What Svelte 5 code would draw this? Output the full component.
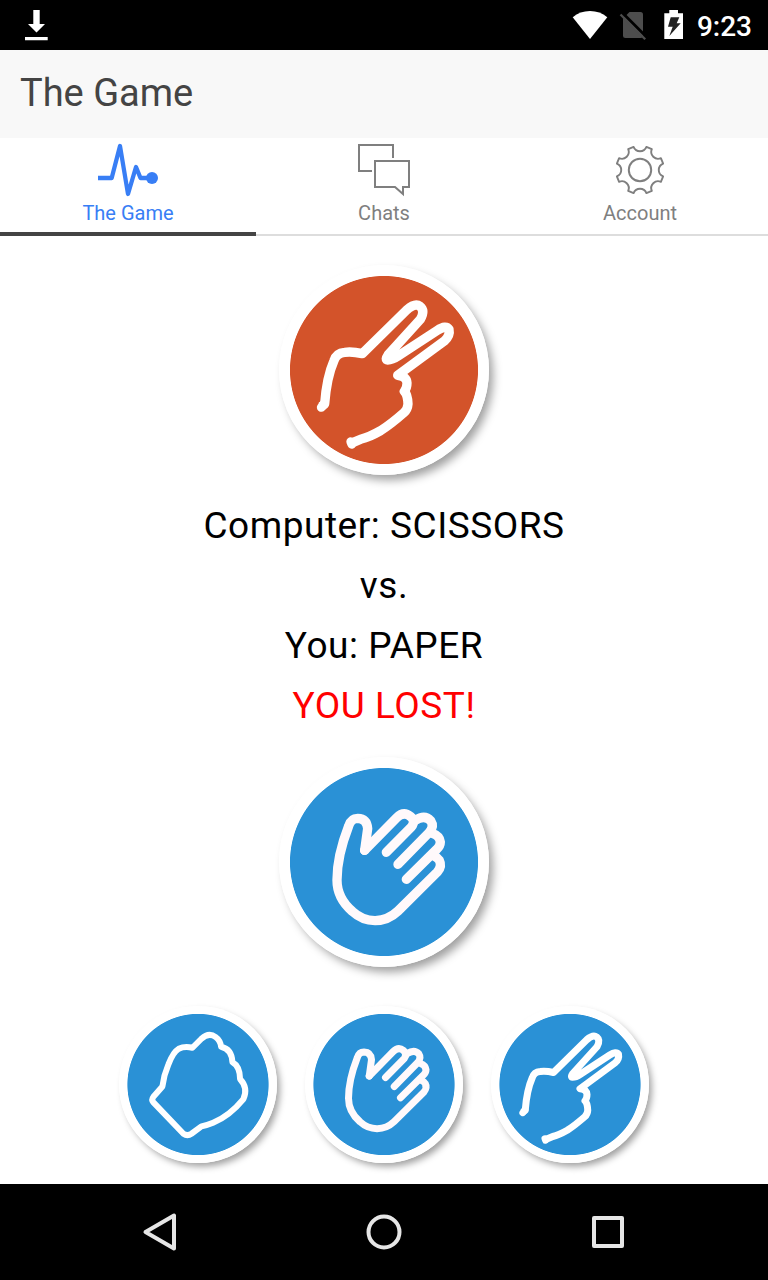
<script>
  const tabs = [
    { id: 'game', label: 'The Game' },
    { id: 'chats', label: 'Chats' },
    { id: 'account', label: 'Account' }
  ];
  let active = $state('game');

  const moves = ['rock', 'paper', 'scissors'];

  const polar = (r, deg) => {
    const a = (deg * Math.PI) / 180;
    return `${(32 + r * Math.sin(a)).toFixed(2)} ${(32 - r * Math.cos(a)).toFixed(2)}`;
  };
  const gear =
    Array.from({ length: 8 }, (_, k) => {
      const c = k * 45;
      return `${k ? 'L' : 'M'}${polar(24, c - 15.5)} A6.9 6.9 0 0 0 ${polar(24, c + 15.5)}`;
    }).join(' ') + 'Z';
</script>

{#snippet hand(kind)}
  {#if kind === 'rock'}
    <svg viewBox="27.75 16.75 472.5 472.5" fill="none" stroke="#fff" stroke-width="18" stroke-linejoin="round">
      <path d="M158 258Q162 225 176 192Q190 155 207 145Q225 136 248 142L275 115Q297 95 318 110Q332 120 334 139Q366 146 368 185Q391 198 391 236Q416 262 401 296Q360 346 310 367Q290 375 275 378L245 400Q233 408 221 400L131 306Q124 298 131 289Z" />
    </svg>
  {:else if kind === 'paper'}
    <svg viewBox="15 13 630 630" fill="none" stroke="#fff9fb" stroke-width="28" stroke-linecap="round" stroke-linejoin="round">
      <path d="M272 293L281 228Q279 198 251 197Q231 197 224 220Q189 310 189 382C189 425 207 452 235 476C275 513 332 513 372 475L490 358Q505 340 496 323Q491 315 483 312" />
      <path d="M272 293L368 195Q389 174 409 191Q426 205 412 223L337 299" />
      <path d="M424 203Q452 185 470 204Q482 222 465 240L372 335" />
      <path d="M477 243Q497 250 499 268Q499 280 488 290L397 380" />
    </svg>
  {:else}
    <svg viewBox="15 13 630 630" fill="none" stroke="#fff" stroke-width="28" stroke-linecap="round" stroke-linejoin="round">
      <path d="M142 438L152 430Q158 350 180 300Q187 277 212 275Q235 272 265 279L398 148Q423 126 438 137Q454 150 439 176L342 283Q332 298 341 298Q355 298 374 285L490 209Q516 192 525 206Q529 225 512 240L371 344Q398 347 399 367Q399 383 391 392Q401 402 402 430Q401 446 390 456Q350 491 320 510Q285 530 262 535L229 549" stroke-linecap="butt" />
      <path d="M142 440L151 428" stroke-width="27" />
      <path d="M230 543L233 551" stroke-width="26" />
    </svg>
  {/if}
{/snippet}

<div class="screen">
  <div class="status">
    <svg class="download" viewBox="0 0 24 32" width="24" height="32" fill="#fff">
      <path d="M9.300 1h6.400v14H21l-8.500 8.500L4 15h5.300zM1 28h22.700v3.300H1z" />
    </svg>
    <div class="indicators">
      <svg viewBox="572 0 116 50" width="116" height="50">
        <path fill="#fff" d="M572.700 17.300Q580 11 590 11T607.300 17.300L590 39Z" />
        <path fill="#4d4d4d" d="M629.500 12H640.500Q643 12 643 14.500V35.500Q643 38 640.500 38H625.500Q623 38 623 35.500V18.500Z" />
        <path stroke="#000" stroke-width="3" d="M621 11.500L648 38.500" />
        <path stroke="#4d4d4d" stroke-width="2.300" d="M620.500 14.500L645.200 39.200" />
        <path fill="#fff" d="M669.300 10H678v3.300h5V39h-18.700V13.300h5z" />
        <path fill="#222" d="M670.700 17.300h8.600l-2.600 6h4L669.300 36l3.400-9.300H668z" />
      </svg>
      <span class="clock">9:23</span>
    </div>
  </div>

  <header>The Game</header>

  <nav class="tabs">
    {#each tabs as tab}
      <button class="tab" class:active={active === tab.id} onclick={() => (active = tab.id)}>
        <svg viewBox="0 0 64 64" width="64" height="64" fill="none" stroke="currentColor">
          {#if tab.id === 'game'}
            <path stroke-width="4.300" stroke-linejoin="round" d="M2 40H15.700L24 8L32 56L40 29L44.500 40H56" />
            <circle cx="56" cy="40" r="6" fill="currentColor" stroke="none" />
          {:else if tab.id === 'chats'}
            <path stroke-width="2" d="M41 20V7H7V33H20M23 23H57V49H51V56L43 49H23Z" />
          {:else}
            <path stroke-width="1.900" stroke-linejoin="round" d={gear} />
            <circle cx="32" cy="32" r="11.200" stroke-width="2" />
          {/if}
        </svg>
        <span>{tab.label}</span>
      </button>
    {/each}
  </nav>

  <main>
    <div class="coin red">{@render hand('scissors')}</div>
    <div class="result">
      <p>Computer: SCISSORS</p>
      <p>vs.</p>
      <p>You: PAPER</p>
      <p class="lost">YOU LOST!</p>
    </div>
    <div class="coin">{@render hand('paper')}</div>
    <div class="choices">
      {#each moves as move}
        <button class="coin small" aria-label={move}>{@render hand(move)}</button>
      {/each}
    </div>
  </main>

  <footer>
    <svg viewBox="0 0 48 48" width="48" height="48"><path d="M9.500 24L38 7.500V40.500Z" /></svg>
    <svg viewBox="0 0 48 48" width="48" height="48"><circle cx="24" cy="24" r="15.500" /></svg>
    <svg viewBox="0 0 48 48" width="48" height="48"><path d="M10 10H38V38H10Z" /></svg>
  </footer>
</div>

<style>
  :global(body) { margin: 0; }
  .screen {
    width: 768px;
    height: 1280px;
    display: flex;
    flex-direction: column;
    overflow: hidden;
    background: #fff;
    font-family: Roboto, sans-serif;
  }
  svg { display: block; }
  button { border: 0; padding: 0; background: none; font: inherit; }
  .status {
    height: 50px;
    flex: none;
    background: #000;
    display: flex;
    justify-content: space-between;
    padding: 0 16px 0 24px;
  }
  .download { margin-top: 9px; }
  .indicators { display: flex; gap: 9px; }
  .clock { color: #fff; font-size: 28px; font-weight: 500; line-height: 53px; }
  header {
    height: 88px;
    flex: none;
    box-sizing: border-box;
    padding-left: 20px;
    background: #f8f8f8;
    color: #444;
    font-size: 38px;
    line-height: 86px;
  }
  .tabs {
    height: 98px;
    flex: none;
    display: grid;
    grid-template-columns: repeat(3, 1fr);
  }
  .tab {
    display: flex;
    flex-direction: column;
    align-items: center;
    box-sizing: border-box;
    border-bottom: 2px solid #ddd;
    color: #7f7f7f;
    font-size: 20px;
    line-height: 22px;
  }
  .tab.active { color: #387ef5; border-bottom: 4px solid #444; }
  main {
    flex: 1;
    display: flex;
    flex-direction: column;
    align-items: center;
    padding-top: 29px;
  }
  .coin {
    width: 210px;
    height: 210px;
    flex: none;
    border-radius: 50%;
    background: radial-gradient(circle closest-side, #2a91d6 93.600px, #fff 94.400px);
    box-shadow: 5px 6px 10px -1px rgba(0, 0, 0, 0.38);
  }
  .coin.red { background: radial-gradient(circle closest-side, #d3532a 93.600px, #fff 94.400px); }
  .coin svg { width: 100%; height: 100%; }
  .coin.small {
    width: 157.500px;
    height: 157.500px;
    background: radial-gradient(circle closest-side, #2a91d6 70.200px, #fff 71px);
    box-shadow: 3.750px 4.500px 7.500px -1px rgba(0, 0, 0, 0.38);
  }
  .result { padding: 21px 0; height: 240px; text-align: center; }
  .result p {
    margin: 0;
    font-size: 37px;
    line-height: 60px;
    letter-spacing: 0.540px;
    color: #000;
  }
  .result .lost { color: #f00; }
  .choices { display: flex; gap: 28.500px; margin-top: 38.800px; }
  footer {
    height: 96px;
    flex: none;
    background: #000;
    display: flex;
    justify-content: center;
    align-items: center;
    gap: 176px;
  }
  footer svg { fill: none; stroke: #e6e6e6; stroke-width: 4; stroke-linejoin: round; }
</style>
